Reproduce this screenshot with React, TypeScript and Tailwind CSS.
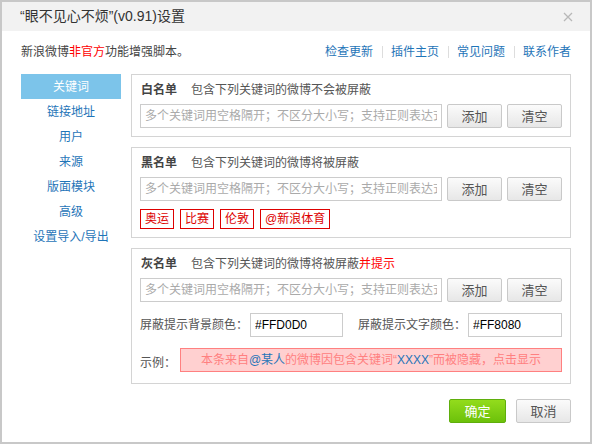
import { useState } from 'react'

const navItems = ['关键词', '链接地址', '用户', '来源', '版面模块', '高级', '设置导入/导出']
const links = ['检查更新', '插件主页', '常见问题', '联系作者']
const placeholder = '多个关键词用空格隔开；不区分大小写；支持正则表达式'

function GrayButton({ label, className = '' }: { label: string; className?: string }) {
  return (
    <button className={`h-[24px] border border-[#c9c9c9] rounded-[2px] bg-linear-to-b from-[#fbfbfb] to-[#e7e7e7] text-[13px] text-[#555] leading-none ${className}`}>
      {label}
    </button>
  )
}

function KeywordRow() {
  return (
    <div className="flex gap-[5px] h-[24px]">
      <input
        placeholder={placeholder}
        className="flex-1 min-w-0 border border-[#ccc] px-[4px] text-[12px] text-[#333] placeholder:text-[#aaa] outline-none"
      />
      <GrayButton label="添加" className="w-[55px]" />
      <GrayButton label="清空" className="w-[55px]" />
    </div>
  )
}

function PanelTitle({ title, children }: { title: string; children: React.ReactNode }) {
  return (
    <div className="h-[16px] flex items-center text-[12px] leading-[16px] mb-[6px]">
      <span className="font-bold text-[#444] pl-px">{title}</span>
      <span className="ml-[14px] text-[#555]">{children}</span>
    </div>
  )
}

export default function App() {
  const [active, setActive] = useState(0)
  const tags = ['奥运', '比赛', '伦敦', '@新浪体育']

  return (
    <div className="w-[592px] h-[444px] border-2 border-[#c8c8c8] bg-white flex flex-col font-['Liberation_Sans','Noto_Sans_CJK_SC',sans-serif]">
      {/* Title bar */}
      <div className="h-[29px] shrink-0 bg-[#f2f2f2] flex items-center justify-between pl-[18px] pr-[17px]">
        <span className="text-[14px] text-[#333]">“眼不见心不烦”(v0.91)设置</span>
        <svg width="10" height="10" viewBox="0 0 10 10" className="text-[#b8b8b8]">
          <path d="M1 1L9 9M9 1L1 9" stroke="currentColor" strokeWidth="1.3" />
        </svg>
      </div>

      <div className="flex-1 px-[19px] pt-[13px] flex flex-col">
        {/* Description */}
        <div className="flex items-center justify-between h-[16px] text-[12px] leading-[16px] mb-[14px]">
          <span className="text-[#444]">
            新浪微博<span className="text-[#f00]">非官方</span>功能增强脚本。
          </span>
          <div className="flex items-center">
            {links.map((l, i) => (
              <div key={l} className="flex items-center">
                {i > 0 && <span className="w-px h-[12px] bg-[#ddd] ml-[9px] mr-[8px]" />}
                <a className="text-[#1f75b8] cursor-pointer">{l}</a>
              </div>
            ))}
          </div>
        </div>

        <div className="flex gap-[10px]">
          {/* Nav */}
          <div className="w-[100px] shrink-0 flex flex-col">
            {navItems.map((n, i) => (
              <div
                key={n}
                onClick={() => setActive(i)}
                className={`h-[25px] flex items-center justify-center text-[12px] cursor-pointer ${
                  active === i ? 'bg-[#7cc4ea] text-white' : 'text-[#1f75b8]'
                }`}
              >
                {n}
              </div>
            ))}
          </div>

          {/* Panels */}
          <div className="flex-1 flex flex-col gap-[10px]">
            <div className="border border-[#d4d4d4] px-[8px] pt-[7px] pb-[8px]">
              <PanelTitle title="白名单">包含下列关键词的微博不会被屏蔽</PanelTitle>
              <KeywordRow />
            </div>

            <div className="border border-[#d4d4d4] px-[8px] pt-[7px] pb-[8px]">
              <PanelTitle title="黑名单">包含下列关键词的微博将被屏蔽</PanelTitle>
              <KeywordRow />
              <div className="flex gap-[6px] mt-[8px]">
                {tags.map((t) => (
                  <span key={t} className="h-[20px] px-[4px] border border-[#d00] text-[#d00] text-[12px] leading-[18px]">
                    {t}
                  </span>
                ))}
              </div>
            </div>

            <div className="border border-[#d4d4d4] px-[8px] pt-[7px] pb-[11px]">
              <PanelTitle title="灰名单">
                包含下列关键词的微博将被屏蔽<span className="text-[#f00]">并提示</span>
              </PanelTitle>
              <KeywordRow />
              <div className="flex items-center h-[24px] mt-[11px] text-[12px] text-[#555]">
                <span className="w-[110px]">屏蔽提示背景颜色：</span>
                <input
                  defaultValue="#FFD0D0"
                  className="w-[93px] h-[24px] border border-[#ccc] px-[4px] text-[12px] text-black outline-none"
                />
                <span className="w-[110px] ml-[15px]">屏蔽提示文字颜色：</span>
                <input
                  defaultValue="#FF8080"
                  className="w-[94px] h-[24px] border border-[#ccc] px-[4px] text-[12px] text-black outline-none"
                />
              </div>
              <div className="flex items-center h-[24px] mt-[11px] text-[12px]">
                <span className="w-[40px] text-[#555] mt-[6px] leading-[17px]">示例：</span>
                <div className="flex-1 h-[24px] bg-[#ffd0d0] border border-[#ff8080] text-[#ff8080] flex items-center justify-center">
                  本条来自<span className="text-[#1f75b8]">@某人</span>的微博因包含关键词“<span className="text-[#1f75b8]">XXXX</span>”而被隐藏，点击显示
                </div>
              </div>
            </div>
          </div>
        </div>

        {/* Footer */}
        <div className="flex justify-end gap-[10px] mt-[15px]">
          <button className="w-[57px] h-[24px] rounded-[2px] border border-[#5fae0c] bg-linear-to-b from-[#93dc1c] to-[#6cc10a] text-white text-[13px] leading-none">
            确定
          </button>
          <GrayButton label="取消" className="w-[55px]" />
        </div>
      </div>
    </div>
  )
}
